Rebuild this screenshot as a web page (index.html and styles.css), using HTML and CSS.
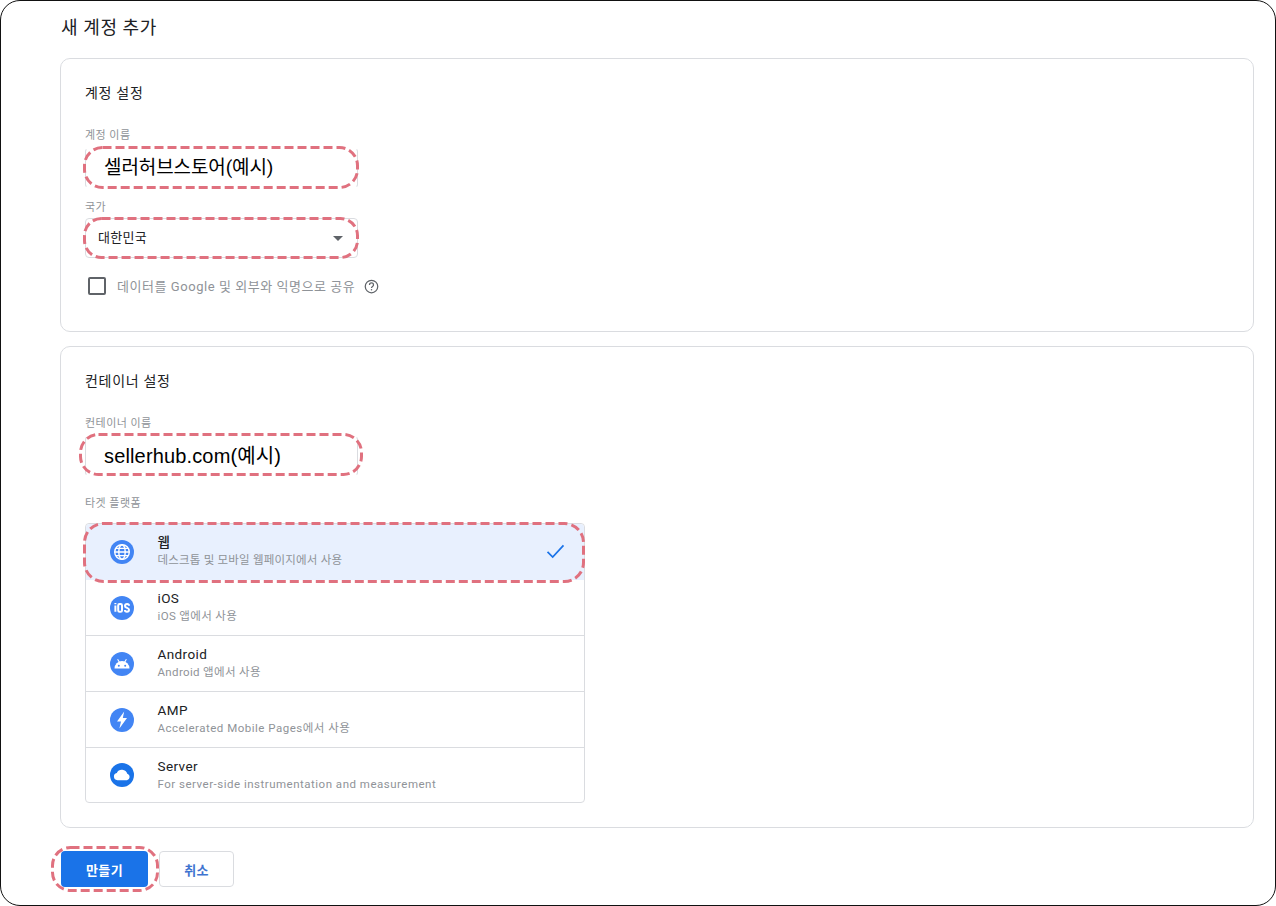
FILE: index.html
```html
<!DOCTYPE html>
<html lang="ko">
<head>
<meta charset="utf-8">
<title>새 계정 추가</title>
<link rel="stylesheet" href="styles.css">
</head>
<body>
<div class="frame">
  <h1 class="page-title">새 계정 추가</h1>

  <section class="card card-account">
    <h2 class="card-title">계정 설정</h2>
    <label class="field-label label-account">계정 이름</label>
    <div class="field field-text">
      <span class="big-value">셀러허브스토어(예시)</span>
      <svg class="mark mark-account"><rect rx="18"/></svg>
    </div>
    <label class="field-label label-country">국가</label>
    <div class="field field-select">
      <span class="select-value">대한민국</span>
      <span class="caret"></span>
      <svg class="mark mark-country"><rect rx="17"/></svg>
    </div>
    <div class="share">
      <span class="checkbox"></span>
      <span class="share-text">데이터를 Google 및 외부와 익명으로 공유</span>
      <svg class="help" viewBox="0 0 24 24" width="15" height="15"><circle cx="12" cy="12" r="10" fill="none" stroke="#5f6368" stroke-width="2"/><path d="M8.8 9.5a3.2 3.2 0 0 1 6.4 0c0 2.2-3.2 2.5-3.2 4.8" fill="none" stroke="#5f6368" stroke-width="2"/><circle cx="12" cy="17.3" r="1.2" fill="#5f6368"/></svg>
    </div>
  </section>

  <section class="card card-container">
    <h2 class="card-title">컨테이너 설정</h2>
    <label class="field-label label-container">컨테이너 이름</label>
    <div class="field field-text field-container">
      <span class="big-value big-latin">sellerhub.com(예시)</span>
      <svg class="mark mark-container"><rect rx="18"/></svg>
    </div>
    <label class="field-label label-platform">타겟 플랫폼</label>
    <div class="platforms">
      <div class="row row-selected">
        <svg class="icon" viewBox="0 0 24 24" width="24" height="24"><circle cx="12" cy="12" r="12" fill="#4285f4"/><g fill="none" stroke="#fff" stroke-width="1.4"><circle cx="12" cy="12" r="7.3"/><ellipse cx="12" cy="12" rx="3.2" ry="7.3"/><path d="M4.7 12h14.6M5.8 8.4h12.4M5.8 15.6h12.4"/></g></svg>
        <div class="row-text"><div class="row-name row-name-ko">웹</div><div class="row-desc row-desc-ko">데스크톱 및 모바일 웹페이지에서 사용</div></div>
        <svg class="check" viewBox="0 0 20 16" width="19" height="15"><path d="M1.5 8.5l5.5 5.5L18.5 1.5" fill="none" stroke="#1a73e8" stroke-width="1.8"/></svg>
        <svg class="mark mark-row"><rect rx="19"/></svg>
      </div>
      <div class="row">
        <svg class="icon" viewBox="0 0 24 24" width="24" height="24"><circle cx="12" cy="12" r="12" fill="#4285f4"/><g fill="none" stroke="#fff" stroke-width="2"><path d="M5.4 9.4v6.4M5.4 7v1.2"/><rect x="8.2" y="8" width="3.8" height="7.8" rx="1.4"/><path d="M19 9.8c0-1-.6-1.8-1.9-1.8s-2.1.7-2.1 1.9c0 2.4 4 1.6 4 3.9 0 1.3-.8 2-2 2s-2.1-.7-2.1-1.8"/></g></svg>
        <div class="row-text"><div class="row-name">iOS</div><div class="row-desc">iOS 앱에서 사용</div></div>
      </div>
      <div class="row">
        <svg class="icon" viewBox="0 0 24 24" width="24" height="24"><circle cx="12" cy="12" r="12" fill="#4285f4"/><path d="M4.5 16.5a7.5 7.5 0 0 1 15 0z" fill="#fff"/><path d="M7.6 7.2l1.8 3M16.4 7.2l-1.8 3" stroke="#fff" stroke-width="1.1"/><circle cx="8.8" cy="13.7" r="1" fill="#4285f4"/><circle cx="15.2" cy="13.7" r="1" fill="#4285f4"/></svg>
        <div class="row-text"><div class="row-name">Android</div><div class="row-desc">Android 앱에서 사용</div></div>
      </div>
      <div class="row">
        <svg class="icon" viewBox="0 0 24 24" width="24" height="24"><circle cx="12" cy="12" r="12" fill="#4285f4"/><path d="M14.2 3.6L7 13.5h4l-1.6 7 7.6-10.6h-4.2z" fill="#fff"/></svg>
        <div class="row-text"><div class="row-name">AMP</div><div class="row-desc row-desc-latin">Accelerated Mobile Pages에서 사용</div></div>
      </div>
      <div class="row">
        <svg class="icon" viewBox="0 0 24 24" width="24" height="24"><circle cx="12" cy="12" r="12" fill="#1a73e8"/><path d="M7.4 17.2a3.7 3.7 0 0 1-.6-7.3 5.6 5.6 0 0 1 10.5.9 3.3 3.3 0 0 1-.3 6.4z" fill="#fff"/></svg>
        <div class="row-text"><div class="row-name">Server</div><div class="row-desc row-desc-latin">For server-side instrumentation and measurement</div></div>
      </div>
    </div>
  </section>

  <div class="actions">
    <button class="btn btn-primary">만들기<svg class="mark mark-btn"><rect rx="18"/></svg></button>
    <button class="btn btn-cancel">취소</button>
  </div>
</div>
</body>
</html>
```
FILE: styles.css
```css
* { box-sizing: border-box; }
html, body { margin: 0; padding: 0; background: #fff; }
body { width: 1276px; height: 906px; overflow: hidden; font-family: Roboto, "Noto Sans CJK KR", sans-serif; }
.frame {
  width: 1276px; height: 906px;
  border: 1px solid #111; border-radius: 20px;
  padding: 0 21px 0 59px;
  overflow: hidden;
  display: flex; flex-direction: column;
}
.page-title { margin: 15px 0 0 1px; height: 42px; font-size: 18px; line-height: 23px; font-weight: 400; color: #202124; letter-spacing: 0.6px; }
.card { border: 1px solid #dadce0; border-radius: 10px; background: #fff; padding: 0 24px; }
.card-account { height: 274px; }
.card-container { height: 482px; margin-top: 14px; }
.card-title { margin: 25px 0 0; font-size: 14px; line-height: 18px; font-weight: 400; color: #202124; letter-spacing: 0.7px; }
.field-label { display: block; font-size: 11px; line-height: 13px; color: #8f9398; letter-spacing: 0.45px; }
.label-account { margin-top: 27px; }
.label-country { margin-top: 13px; }
.label-container { margin-top: 27px; }
.label-platform { margin-top: 21px; }
.field { position: relative; width: 273px; border: 1px solid #dadce0; border-radius: 4px; }
.field-text { height: 40px; margin-top: 6px; display: flex; align-items: center; padding-left: 18px; border-color: transparent #dadce0; }
.field-container { height: 40px; margin-top: 6px; }
.big-value { font-size: 19px; color: #000; letter-spacing: -0.1px; line-height: 24px; }
.big-latin { font-family: "Liberation Sans", "Noto Sans CJK KR", sans-serif; font-size: 20px; letter-spacing: 0.15px; }
.field-select { height: 40px; margin-top: 4px; display: flex; align-items: center; justify-content: space-between; padding: 0 14px 0 12px; }
.select-value { font-size: 13px; line-height: 18px; margin-bottom: 1px; color: #202124; letter-spacing: 0.3px; }
.caret { width: 0; height: 0; border: 5.5px solid transparent; border-top: 5.5px solid #5f6368; border-bottom: 0; }
.share { display: flex; align-items: center; margin: 18px 0 0 3px; height: 20px; }
.checkbox { width: 18px; height: 18px; border: 2px solid #5f6368; border-radius: 2px; }
.share-text { margin: 0 0 2px 11px; font-size: 13px; color: #8f9398; letter-spacing: 0.55px; }
.help { margin-left: 9px; }
.platforms { width: 500px; height: 280px; margin-top: 13px; border: 1px solid #dadce0; border-radius: 4px; }
.row { position: relative; height: 56px; display: flex; align-items: center; padding-left: 24px; border-bottom: 1px solid #dadce0; }
.row:last-child { height: 54px; border-bottom: 0; }
.row-selected { background: #e8f0fe; border-bottom-color: #e8f0fe; border-radius: 4px 4px 0 0; }
.icon { flex: none; }
.row-text { margin-left: 23.5px; flex: 1; padding-bottom: 1px; }
.row-name { font-size: 13.5px; line-height: 17px; font-weight: 400; color: #202124; letter-spacing: 0.4px; }
.row-name-ko { font-weight: 500; }
.row-desc { font-size: 11.5px; line-height: 16px; margin-top: 1px; color: #8f9398; letter-spacing: 0.35px; }
.row-desc-ko { letter-spacing: 0.2px; }
.row-desc-latin { letter-spacing: 0.5px; }
.check { margin-right: 19px; }
.actions { display: flex; align-items: flex-start; gap: 12px; margin: 23px 0 0 1px; }
.btn { position: relative; height: 36px; border-radius: 4px; font-family: inherit; font-size: 13px; font-weight: 700; letter-spacing: 0.3px; padding: 0; }
.btn-primary { width: 87px; background: #1a73e8; color: #fff; border: 0; }
.btn-cancel { width: 75px; margin-left: -1px; background: #fff; color: #3f74d0; border: 1px solid #dadce0; }
.mark { position: absolute; overflow: visible; pointer-events: none; }
.mark rect { x: 1.5px; y: 1.5px; width: calc(100% - 3px); height: calc(100% - 3px); fill: none; stroke: #e0717f; stroke-width: 3px; stroke-dasharray: 9 4; }
.mark-account { left: -3px; top: -3px; width: 276px; height: 43px; }
.mark-country { left: -3px; top: -2px; width: 276px; height: 42px; }
.mark-container { left: -7px; top: -4px; width: 284px; height: 43px; }
.mark-row { left: -3px; top: -2px; width: 502px; height: 61px; }
.mark-btn { left: -10px; top: -5px; width: 108px; height: 46px; }
```
